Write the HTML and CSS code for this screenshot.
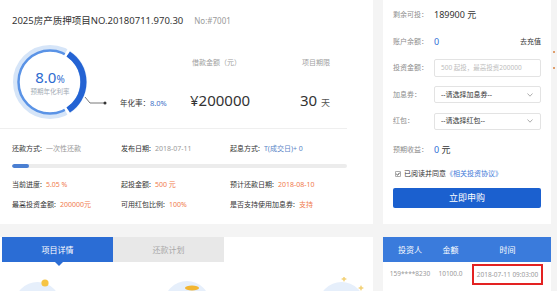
FILE: index.html
```html
<!DOCTYPE html>
<html lang="zh-CN">
<head>
<meta charset="utf-8">
<title>项目详情</title>
<link rel="stylesheet" href="styles.css">
</head>
<body>
<div class="main">
  <div class="col-left">
    <section class="card-info">
      <div class="title-row">
        <h1 class="title">2025房产质押项目NO.20180711.970.30</h1>
        <span class="code">No:#7001</span>
      </div>
      <div class="hero">
        <svg class="ring" width="96" height="87" viewBox="0 0 96 87">
          <circle cx="38" cy="41" r="34.5" fill="none" stroke="#d6e5f8" stroke-width="5"/>
          <circle cx="38" cy="41" r="31.5" fill="none" stroke="#5a93e6" stroke-width="2.5"/>
          <path d="M53.73 11.42 A33.5 33.5 0 0 1 56.24 12.90 M56.24 69.10 A33.5 33.5 0 0 1 53.73 70.58" fill="none" stroke="#fff" stroke-width="9"/>
          <path d="M56.24 12.90 A33.5 33.5 0 0 1 56.24 69.10" fill="none" stroke="#2463d3" stroke-width="6"/>
          <polyline points="73,56 78,62 93,62" fill="none" stroke="#555" stroke-width="0.8"/>
          <circle cx="93" cy="62" r="1.5" fill="#333"/>
          <text x="38" y="41.5" text-anchor="middle" class="ring-num">8.0<tspan class="ring-pct">%</tspan></text>
          <text x="38" y="53" text-anchor="middle" class="ring-cap">预期年化利率</text>
        </svg>
        <div class="hero-rate">年化率：<em>8.0%</em></div>
        <div class="stat stat-amount">
          <div class="stat-label">借款金额（元）</div>
          <div class="stat-value">¥200000</div>
        </div>
        <div class="stat stat-term">
          <div class="stat-label">项目期限</div>
          <div class="stat-value">30 <small>天</small></div>
        </div>
      </div>
      <div class="details">
        <div class="drow">
          <div><span class="k">还款方式:</span><span class="v gray">一次性还款</span></div>
          <div><span class="k">发布日期:</span><span class="v gray">2018-07-11</span></div>
          <div><span class="k">起息方式:</span><span class="v blue">T(成交日)+ 0</span></div>
        </div>
        <div class="progress"><div class="progress-fill" style="width:5.05%"></div></div>
        <div class="drow">
          <div><span class="k">当前进度:</span><span class="v orange">5.05 %</span></div>
          <div><span class="k">起投金额:</span><span class="v orange">500 元</span></div>
          <div><span class="k">预计还款日期:</span><span class="v orange">2018-08-10</span></div>
        </div>
        <div class="drow drow-last">
          <div><span class="k">最高投资金额:</span><span class="v orange">200000元</span></div>
          <div><span class="k">可用红包比例:</span><span class="v orange">100%</span></div>
          <div><span class="k">是否支持使用加息券:</span><span class="v orange">支持</span></div>
        </div>
      </div>
    </section>
    <section class="card-tabs">
      <div class="tabs">
        <div class="tab active">项目详情</div>
        <div class="tab">还款计划</div>
      </div>
      <div class="illus">
        <svg class="art" width="48" height="20" viewBox="0 0 48 20">
          <circle cx="22.5" cy="28" r="23" fill="#e6effb"/>
          <circle cx="30" cy="6" r="3.6" fill="#f6c443"/>
        </svg>
        <svg class="art" width="48" height="20" viewBox="0 0 48 20">
          <circle cx="20" cy="27" r="23" fill="#e6effb"/>
          <ellipse cx="25" cy="11" rx="7" ry="2.6" fill="#f2b531"/>
          <path d="M39.5 1.5 A6 6 0 1 1 30 9.5 A4.6 4.6 0 0 0 39.5 1.5 Z" fill="#f6c443"/>
        </svg>
        <svg class="art" width="48" height="20" viewBox="0 0 48 20">
          <circle cx="22.5" cy="28" r="23" fill="#e6effb"/>
          <path d="M25 -1 L26 1 L28 2 L26 3 L25 5 L24 3 L22 2 L24 1 Z" fill="#f3d27a"/>
          <path d="M42 8 L43 10 L45 11 L43 12 L42 14 L41 12 L39 11 L41 10 Z" fill="#f3d27a"/>
        </svg>
      </div>
    </section>
  </div>

  <div class="col-right">
    <section class="card-invest">
      <div class="frow">
        <span class="flabel">剩余可投：</span>
        <span class="fval">189900 元</span>
      </div>
      <div class="frow">
        <span class="flabel">账户余额：</span>
        <span class="fval num">0</span>
        <span class="link">去充值</span>
      </div>
      <div class="frow">
        <span class="flabel">投资金额：</span>
        <div class="field">500 起投，最高投资200000</div>
      </div>
      <div class="frow">
        <span class="flabel">加息券：</span>
        <div class="field select">--请选择加息券--
          <svg width="6" height="4" viewBox="0 0 6 4"><polyline points="0.5,0.5 3,3.2 5.5,0.5" fill="none" stroke="#999" stroke-width="0.8"/></svg>
        </div>
      </div>
      <div class="frow">
        <span class="flabel">红包：</span>
        <div class="field select">--请选择红包--
          <svg width="6" height="4" viewBox="0 0 6 4"><polyline points="0.5,0.5 3,3.2 5.5,0.5" fill="none" stroke="#999" stroke-width="0.8"/></svg>
        </div>
      </div>
      <div class="frow frow-income">
        <span class="flabel">预期收益：</span>
        <span class="fval"><span class="num">0</span> 元</span>
      </div>
      <div class="frow check-row">
        <svg width="6" height="6" viewBox="0 0 6 6"><rect x="0.4" y="0.4" width="5.2" height="5.2" rx="0.8" fill="#fff" stroke="#777" stroke-width="0.7"/><polyline points="1.3,3 2.5,4.2 4.7,1.7" fill="none" stroke="#333" stroke-width="0.9"/></svg>
        <span>已阅读并同意<span class="agree">《相关投资协议》</span></span>
      </div>
      <div class="btn">立即申购</div>
    </section>
    <section class="card-records">
      <table class="records">
        <colgroup><col class="c1"><col class="c2"><col class="c3"></colgroup>
        <thead>
          <tr><th>投资人</th><th>金额</th><th>时间</th></tr>
        </thead>
        <tbody>
          <tr><td>159****8230</td><td>10100.0</td><td><span class="hl">2018-07-11 09:03:00</span></td></tr>
        </tbody>
      </table>
    </section>
  </div>

  <div class="edge"><i></i><i></i></div>
</div>
</body>
</html>
```

FILE: styles.css
```css
* { box-sizing: border-box; margin: 0; padding: 0; }
html, body { width: 557px; height: 291px; overflow: hidden; }
body {
  background: #f4f4f4;
  font-family: "Noto Sans", "Noto Sans CJK SC", sans-serif;
  color: #333;
  font-size: 7px;
  line-height: 10px;
}
em { font-style: normal; }

.main { display: flex; align-items: flex-start; }
.col-left { width: 373px; display: flex; flex-direction: column; gap: 13px; }
.col-right { width: 168px; margin-left: 10px; display: flex; flex-direction: column; gap: 13px; }
.edge { width: 6px; display: flex; flex-direction: column; align-items: center; padding-top: 51px; gap: 14px; }
.edge i { display: block; width: 2px; height: 2px; border-radius: 50%; background: #d9823f; }

/* ---------- project info card ---------- */
.card-info { background: #fff; height: 224px; }
.title-row { display: flex; align-items: center; height: 41px; padding-left: 12px; }
.title { font-size: 9.5px; font-weight: normal; line-height: 12px; color: #333; }
.code { margin-left: 11px; font-size: 8px; line-height: 12px; color: #9a9a9a; }

.hero { display: flex; align-items: flex-start; height: 87px; padding-left: 12px; }
.ring { flex: none; display: block; }
.ring-num { font-family: "Noto Sans", sans-serif; font-size: 15px; fill: #2d6bd0; }
.ring-pct { font-size: 10px; }
.ring-cap { font-family: "Noto Sans CJK SC", sans-serif; font-size: 6.5px; fill: #a3abb5; }
.hero-rate { flex: none; width: 70px; margin-left: 12px; margin-top: 57px; font-size: 7.5px; line-height: 10px; color: #333; }
.hero-rate em { color: #3d72c9; }
.stat { flex: none; padding-top: 17px; }
.stat-amount { width: 110px; }
.stat-label { padding-left: 2px; font-size: 7px; line-height: 10px; color: #a0a0a0; }
.stat-value { margin-top: 22px; font-size: 15px; line-height: 20px; color: #333; }
.stat-value small { font-size: 9px; color: #555; }

.details { height: 96px; margin-right: 26px; padding: 14px 0 0 12px; border-top: 1px solid #efefef; }
.drow { display: grid; grid-template-columns: 109px 109px 109px; line-height: 12px; font-size: 7px; }
.drow-last { margin-top: 8px; }
.k { color: #333; }
.v { margin-left: 4px; }
.gray { color: #999; }
.blue { color: #5a84c6; }
.orange { color: #f07b4c; }
.progress { width: 335px; height: 4px; margin: 9px 0 11px; background: #ececec; border-radius: 2px; overflow: hidden; }
.progress-fill { height: 100%; background: #4a7fd2; border-radius: 2px; }

/* ---------- tabs card ---------- */
.card-tabs { background: #fff; height: 60px; }
.tabs { display: flex; padding-left: 2px; }
.tab { width: 111px; height: 25px; line-height: 25px; text-align: center; font-size: 8px; background: #e8e8e8; color: #a9a9a9; }
.tab.active { position: relative; background: #2b6dd5; color: #fff; }
.tab.active::after {
  content: ""; position: absolute; left: 50%; bottom: -4px; margin-left: -3px;
  border-left: 4px solid transparent; border-right: 4px solid transparent; border-top: 4px solid #2b6dd5;
}
.illus { display: flex; gap: 104px; padding-left: 15px; margin-top: 15px; }
.art { display: block; flex: none; }

/* ---------- invest card ---------- */
.card-invest { background: #fff; height: 224px; padding: 5px 10px 0; display: flex; flex-direction: column; gap: 6.5px; }
.frow { display: flex; align-items: center; height: 20px; flex: none; }
.flabel { flex: none; width: 41px; font-size: 7px; color: #8c8c8c; }
.fval { font-size: 9px; color: #333; }
.num { color: #2f6fd6; }
.link { margin-left: auto; font-size: 7px; color: #333; }
.field {
  flex: 1; height: 18px; display: flex; align-items: center; padding: 0 6px;
  border: 1px solid #e3e3e3; border-radius: 2px; font-size: 6.5px; color: #bdbdbd;
}
.field.select { height: 17px; justify-content: space-between; font-size: 7px; color: #333; }
.field.select svg { margin-right: 1px; }
.frow-income { margin-top: 2px; }
.check-row { margin-top: -2px; padding-left: 2px; gap: 3px; font-size: 7px; color: #333; }
.agree { color: #3c78d8; }
.btn {
  flex: none; height: 20px; margin-top: -2.5px; border-radius: 2px; background: #1b60cf;
  color: #fff; text-align: center; line-height: 20px; font-size: 9px;
}

/* ---------- records ---------- */
.card-records { background: #fff; height: 60px; }
.records { width: 168px; border-collapse: collapse; table-layout: fixed; }
.records .c1 { width: 54px; }
.records .c2 { width: 27px; }
.records .c3 { width: 87px; }
.records th { height: 25px; padding: 0; background: #3a7bdc; color: #fff; font-size: 8px; font-weight: normal; text-align: center; }
.records td { height: 24px; padding: 0; font-size: 6.5px; color: #999; text-align: center; white-space: nowrap; }
.hl { display: inline-block; padding: 4px 3px; border: 2px solid #e32222; line-height: 9px; }
```
